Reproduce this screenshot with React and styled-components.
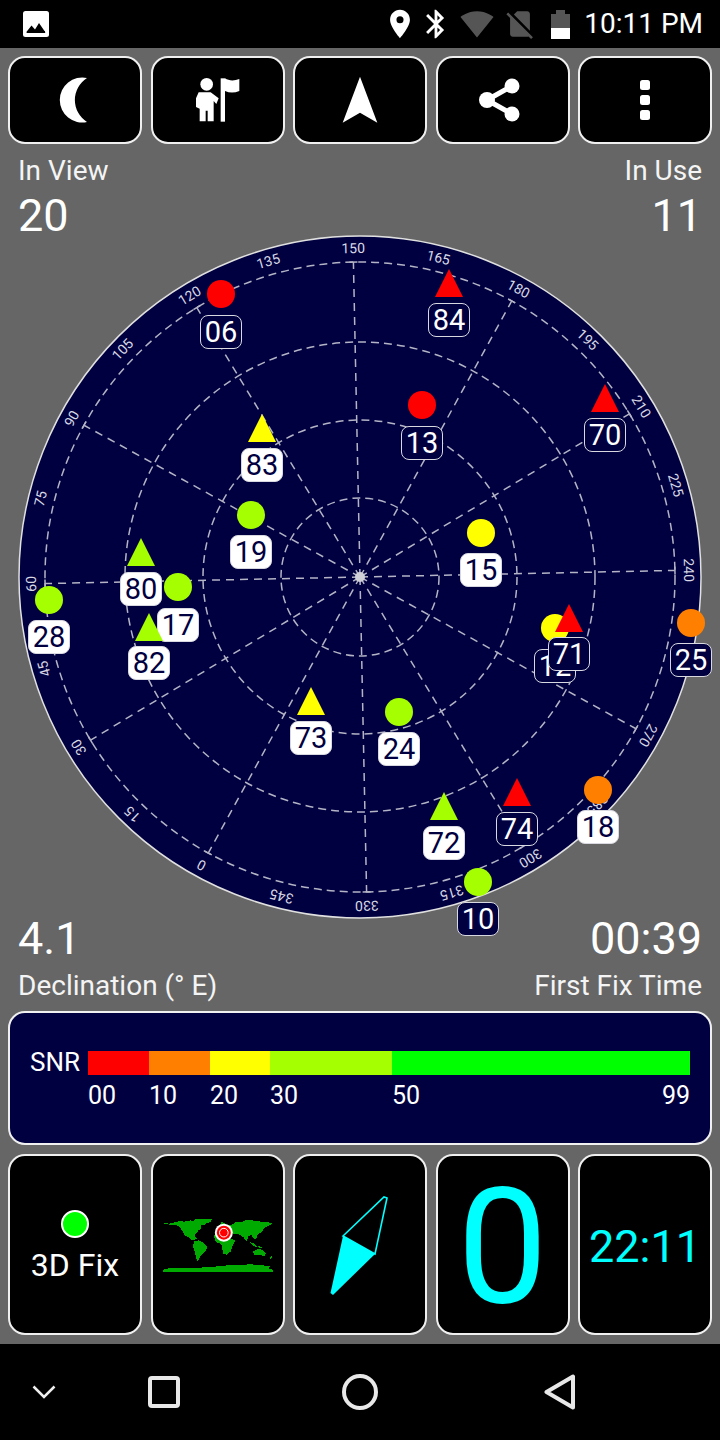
import React from "react";
import styled, { createGlobalStyle } from "styled-components";
import { MdPlace, MdBluetooth, MdSignalWifi4Bar, MdNoSim } from "react-icons/md";

const RADAR_LEFT = 18;
const RADAR_TOP = 235;
const RADAR_SIZE = 684;
const ROTATION = -151.2;

const RED = "#ff0000";
const ORANGE = "#ff8000";
const YELLOW = "#ffff00";
const LIME = "#a6ff00";

// x, y = marker centre (circle) or apex (triangle), labelX, labelY = centre of the tag
const satellites = [
  { id: "06", shape: "circle", color: RED, x: 221, y: 294, labelX: 221, labelY: 332 },
  { id: "84", shape: "triangle", color: RED, x: 449, y: 269, labelX: 449, labelY: 320 },
  { id: "13", shape: "circle", color: RED, x: 422, y: 405, labelX: 422, labelY: 443 },
  { id: "70", shape: "triangle", color: RED, x: 605, y: 384, labelX: 605, labelY: 435 },
  { id: "83", shape: "triangle", color: YELLOW, x: 262, y: 414, labelX: 262, labelY: 465, used: true },
  { id: "15", shape: "circle", color: YELLOW, x: 481, y: 533, labelX: 481, labelY: 570, used: true },
  { id: "19", shape: "circle", color: LIME, x: 251, y: 515, labelX: 251, labelY: 552, used: true },
  { id: "17", shape: "circle", color: LIME, x: 178, y: 587, labelX: 178, labelY: 625, used: true },
  { id: "80", shape: "triangle", color: LIME, x: 141, y: 538, labelX: 141, labelY: 589, used: true },
  { id: "28", shape: "circle", color: LIME, x: 49, y: 600, labelX: 49, labelY: 637, used: true },
  { id: "82", shape: "triangle", color: LIME, x: 149, y: 613, labelX: 149, labelY: 663, used: true },
  { id: "73", shape: "triangle", color: YELLOW, x: 311, y: 687, labelX: 311, labelY: 738, used: true },
  { id: "24", shape: "circle", color: LIME, x: 399, y: 712, labelX: 399, labelY: 749, used: true },
  { id: "12", shape: "circle", color: YELLOW, x: 555, y: 628, labelX: 555, labelY: 666 },
  { id: "71", shape: "triangle", color: RED, x: 569, y: 604, labelX: 569, labelY: 654 },
  { id: "25", shape: "circle", color: ORANGE, x: 691, y: 623, labelX: 691, labelY: 660 },
  { id: "18", shape: "circle", color: ORANGE, x: 598, y: 790, labelX: 598, labelY: 827, used: true },
  { id: "74", shape: "triangle", color: RED, x: 517, y: 778, labelX: 517, labelY: 829 },
  { id: "72", shape: "triangle", color: LIME, x: 444, y: 792, labelX: 444, labelY: 843, used: true },
  { id: "10", shape: "circle", color: LIME, x: 478, y: 882, labelX: 478, labelY: 919 },
];

const snrSegments = [
  { color: RED, width: 61, tick: "00" },
  { color: ORANGE, width: 61, tick: "10" },
  { color: YELLOW, width: 60, tick: "20" },
  { color: LIME, width: 122, tick: "30" },
  { color: "#00ff00", width: 298, tick: "50", end: "99" },
];

const GlobalStyle = createGlobalStyle`
  html, body {
    margin: 0;
    padding: 0;
    background: #666666;
  }
  body {
    font-family: Roboto, "Liberation Sans", sans-serif;
  }
`;

const Screen = styled.div`
  width: 720px;
  height: 1440px;
  display: flex;
  flex-direction: column;
  background: #666666;
  color: #fff;
  overflow: hidden;
`;

const StatusBar = styled.div`
  height: 48px;
  flex: none;
  background: #000;
  display: flex;
  align-items: center;
  justify-content: space-between;
  padding: 0 17px 0 23px;
`;

const StatusGroup = styled.div`
  display: flex;
  align-items: center;
`;

const StatusIcon = styled.span`
  display: flex;
  margin-left: ${(p) => p.$gap || 0}px;
  color: ${(p) => p.$color || "#fff"};
`;

const Clock = styled.span`
  font-size: 28px;
  margin-left: 14px;
  line-height: 48px;
`;

const Main = styled.div`
  flex: 1;
  display: flex;
  flex-direction: column;
  padding: 8px 8px 9px;
  min-height: 0;
`;

const TileRow = styled.div`
  display: flex;
  gap: 8.5px;
  flex: none;
  height: ${(p) => p.$height}px;
`;

const Tile = styled.div`
  flex: 1;
  box-sizing: border-box;
  background: #000;
  border: 2px solid #f0f0f0;
  border-radius: 17px;
  display: flex;
  flex-direction: column;
  align-items: center;
  justify-content: center;
  min-width: 0;
`;

const Stats = styled.div`
  flex: none;
  height: ${(p) => p.$height}px;
  display: flex;
  justify-content: space-between;
  padding: 0 10px;
`;

const StatColumn = styled.div`
  display: flex;
  flex-direction: column;
  align-items: ${(p) => (p.$right ? "flex-end" : "flex-start")};
`;

const StatLabel = styled.span`
  font-size: 28px;
  line-height: 32px;
  margin-top: ${(p) => p.$top || 0}px;
  color: #f4f4f4;
`;

const StatValue = styled.span`
  font-size: 45px;
  line-height: 50px;
  margin-top: ${(p) => p.$top || 0}px;
`;

const Radar = styled.div`
  position: relative;
  flex: none;
  width: ${RADAR_SIZE}px;
  height: ${RADAR_SIZE}px;
  margin: 0 auto;
`;

const RadarGrid = styled.svg`
  display: block;
  width: 100%;
  height: 100%;
`;

const Marker = styled.div`
  position: absolute;
  left: ${(p) => p.$x}px;
  top: ${(p) => p.$y}px;
  background: ${(p) => p.$color};
  width: 28px;
  height: 28px;
  ${(p) =>
    p.$shape === "circle"
      ? "border-radius: 50%; transform: translate(-14px, -14px);"
      : "clip-path: polygon(50% 0, 100% 100%, 0 100%); transform: translateX(-14px);"}
`;

const Tag = styled.div`
  position: absolute;
  left: ${(p) => p.$x}px;
  top: ${(p) => p.$y}px;
  transform: translate(-21px, -17px);
  box-sizing: border-box;
  width: 42px;
  height: 34px;
  border-radius: 8px;
  display: flex;
  align-items: center;
  justify-content: center;
  font-size: 29px;
  line-height: 1;
  border: 1px solid #d8d8e0;
  background: ${(p) => (p.$used ? "#ffffff" : "#000040")};
  color: ${(p) => (p.$used ? "#000040" : "#ffffff")};
`;

const SnrPanel = styled.div`
  flex: none;
  box-sizing: border-box;
  height: 134px;
  margin-bottom: 9px;
  background: #000040;
  border: 2px solid #f0f0f0;
  border-radius: 17px;
  display: flex;
  padding: 38px 20px 0 20px;
`;

const SnrTitle = styled.span`
  width: 58px;
  font-size: 26px;
  line-height: 22px;
`;

const SnrScale = styled.div`
  display: flex;
`;

const SnrSegment = styled.div`
  width: ${(p) => p.$width}px;
`;

const SnrSwatch = styled.div`
  height: 24px;
  background: ${(p) => p.$color};
`;

const SnrTicks = styled.div`
  display: flex;
  justify-content: space-between;
  font-size: 25px;
  line-height: 28px;
  margin-top: 7px;
`;

const FixDot = styled.div`
  width: 24px;
  height: 24px;
  border-radius: 50%;
  background: #00ff00;
  border: 2px solid #fff;
  margin-top: 8px;
  margin-bottom: 5px;
`;

const FixText = styled.span`
  font-size: 32px;
  line-height: 44px;
`;

const BigDigit = styled.span`
  font-size: 161px;
  line-height: 161px;
  padding-top: 6px;
  color: #00ffff;
`;

const CyanClock = styled.span`
  font-size: 45px;
  line-height: 50px;
  margin-top: 4px;
  color: #00ffff;
`;

const NavBar = styled.div`
  flex: none;
  height: 96px;
  background: #000;
  display: grid;
  grid-template-columns: 88px 152px 240px 160px;
  place-items: center;
`;

const PhotoIcon = () => (
  <svg width="26" height="26" viewBox="0 0 26 26">
    <rect width="26" height="26" rx="2.5" fill="#fff" />
    <path d="M3 21.5l5.5-7 3.5 4 4-6.5 6.5 9.5z" fill="#000" />
    <rect x="4" y="20" width="18" height="2" fill="#000" />
  </svg>
);

const BatteryIcon = () => (
  <svg width="19" height="29" viewBox="0 0 19 29">
    <rect x="5" width="9" height="5" fill="#555" />
    <rect y="4" width="19" height="14" fill="#555" />
    <rect y="18" width="19" height="11" fill="#fff" />
  </svg>
);

const MoonIcon = () => (
  <svg width="50" height="50" viewBox="0 0 50 50">
    <path d="M37 3A22.5 22.5 0 1 0 37 47A26 26 0 0 1 37 3Z" fill="#fff" />
  </svg>
);

const FlagPersonIcon = () => (
  <svg width="50" height="50" viewBox="130 60 150 150">
    <circle cx="171" cy="88" r="19" fill="#fff" />
    <path
      d="M147 112H183L207 130L200 147L192 138V199H174V167H168V199H150V161L139 156V130Z"
      fill="#fff"
    />
    <rect x="213" y="70" width="13" height="130" fill="#fff" />
    <path d="M226 70C238 78 254 78 269 72V108C254 114 240 114 226 108Z" fill="#fff" />
  </svg>
);

const ArrowIcon = () => (
  <svg width="50" height="50" viewBox="555 60 150 150">
    <path d="M630 65L682 203L630 173L578 203Z" fill="#fff" />
  </svg>
);

const ShareIcon = () => (
  <svg width="50" height="50" viewBox="0 0 50 50">
    <path d="M9 25L34 11M9 25L34 39" stroke="#fff" strokeWidth="5" fill="none" />
    <circle cx="9" cy="25" r="8" fill="#fff" />
    <circle cx="34" cy="11" r="7.5" fill="#fff" />
    <circle cx="34" cy="39" r="7.5" fill="#fff" />
  </svg>
);

const MoreIcon = () => (
  <svg width="12" height="42" viewBox="0 0 12 42">
    <rect x="1" y="1" width="10" height="10" rx="2.5" fill="#fff" />
    <rect x="1" y="16" width="10" height="10" rx="2.5" fill="#fff" />
    <rect x="1" y="31" width="10" height="10" rx="2.5" fill="#fff" />
  </svg>
);

const WorldMap = () => (
  <svg width="112" height="54" viewBox="37 85 331 162">
    <g fill="#00aa00" shapeRendering="crispEdges">
      <path d="M37 100L58 102L76 97L90 93L100 96L120 92L128 94L136 88L186 88L180 97L165 102L158 108L150 106L152 118L144 122L136 132L132 140L140 146L132 150L124 152L116 144L104 138L96 124L88 112L76 106L50 104Z" />
      <path d="M130 156L146 152L156 158L171 172L164 186L150 198L142 216L136 204L134 188L128 172Z" />
      <path d="M190 136L204 126L230 132L238 146L254 152L246 168L240 186L228 195L218 192L214 168L206 160L196 158Z" />
      <path d="M196 116L210 104L214 96L232 108L246 104L256 96L270 98L290 90L332 96L368 100L356 108L344 112L338 120L332 128L322 134L316 150L308 144L302 134L294 140L288 154L278 142L264 134L248 132L228 122L198 126Z" />
      <path d="M308 186L322 177L334 180L346 192L342 200L330 196L312 197Z" />
      <path d="M298 158L310 160L322 172L326 168L338 176L310 170Z" />
      <path d="M358 204L364 198L366 202L360 208Z" />
      <path d="M37 240L60 235L110 236L180 232L232 227L300 224L358 229L356 238L368 240V246H37Z" />
    </g>
    <circle cx="220" cy="129" r="27" fill="#fff" />
    <circle cx="220" cy="129" r="21" fill="#ff0000" />
    <circle cx="220" cy="129" r="13" fill="none" stroke="#fff" strokeWidth="3" />
  </svg>
);

const CompassNeedle = () => (
  <svg width="66" height="108" viewBox="328 1190 66 108">
    <path d="M344 1235L376 1253L388 1197L385 1196Z" fill="none" stroke="#00ffff" strokeWidth="1.6" />
    <path d="M344 1235L376 1253L334 1294L331.5 1292Z" fill="#00ffff" />
  </svg>
);

const SkyGrid = () => {
  const c = RADAR_SIZE / 2;
  const spokes = [];
  const labels = [];
  for (let az = 0; az < 360; az += 15) {
    const bearing = az + ROTATION;
    const rad = (bearing * Math.PI) / 180;
    const sin = Math.sin(rad);
    const cos = Math.cos(rad);
    labels.push(
      <text
        key={az}
        x={c + sin * 329}
        y={c - cos * 329}
        transform={`rotate(${bearing} ${c + sin * 329} ${c - cos * 329})`}
        textAnchor="middle"
        dominantBaseline="central"
        fontSize="14"
        fill="#d8d8e4"
      >
        {az}
      </text>
    );
    if (az % 30 === 0) {
      const ex = c + sin * 315;
      const ey = c - cos * 315;
      spokes.push(
        <g key={az}>
          <line x1={c} y1={c} x2={ex} y2={ey} strokeDasharray="8 6" />
          <line x1={ex - cos * 4} y1={ey - sin * 4} x2={ex + cos * 4} y2={ey + sin * 4} />
        </g>
      );
    }
  }
  return (
    <RadarGrid viewBox={`0 0 ${RADAR_SIZE} ${RADAR_SIZE}`}>
      <circle cx={c} cy={c} r={c - 1} fill="#000040" stroke="#e0e0e0" strokeWidth="1.5" />
      <g fill="none" stroke="#b4b4c6" strokeWidth="1.5">
        {[79, 157, 235, 315].map((r) => (
          <circle key={r} cx={c} cy={c} r={r} strokeDasharray="8 5" />
        ))}
        {spokes}
      </g>
      <circle cx={c} cy={c} r="5" fill="#d0d0d8" />
      {labels}
    </RadarGrid>
  );
};

export default function App() {
  return (
    <Screen>
      <GlobalStyle />
      <StatusBar>
        <PhotoIcon />
        <StatusGroup>
          <StatusIcon><MdPlace size={34} /></StatusIcon>
          <StatusIcon $gap={2}><MdBluetooth size={34} /></StatusIcon>
          <StatusIcon $gap={7} $color="#555"><MdSignalWifi4Bar size={34} /></StatusIcon>
          <StatusIcon $gap={9} $color="#555"><MdNoSim size={34} /></StatusIcon>
          <StatusIcon $gap={14}><BatteryIcon /></StatusIcon>
          <Clock>10:11 PM</Clock>
        </StatusGroup>
      </StatusBar>

      <Main>
        <TileRow $height={88}>
          <Tile><MoonIcon /></Tile>
          <Tile><FlagPersonIcon /></Tile>
          <Tile><ArrowIcon /></Tile>
          <Tile><ShareIcon /></Tile>
          <Tile><MoreIcon /></Tile>
        </TileRow>

        <Stats $height={91}>
          <StatColumn>
            <StatLabel $top={11}>In View</StatLabel>
            <StatValue $top={4}>20</StatValue>
          </StatColumn>
          <StatColumn $right>
            <StatLabel $top={11}>In Use</StatLabel>
            <StatValue $top={4}>11</StatValue>
          </StatColumn>
        </Stats>

        <Radar>
          <SkyGrid />
          {satellites.map((s) => (
            <React.Fragment key={s.id}>
              <Marker $shape={s.shape} $color={s.color} $x={s.x - RADAR_LEFT} $y={s.y - RADAR_TOP} />
              <Tag $used={s.used} $x={s.labelX - RADAR_LEFT} $y={s.labelY - RADAR_TOP}>
                {s.id}
              </Tag>
            </React.Fragment>
          ))}
        </Radar>

        <Stats $height={92}>
          <StatColumn>
            <StatValue $top={-5}>4.1</StatValue>
            <StatLabel $top={6}>Declination (° E)</StatLabel>
          </StatColumn>
          <StatColumn $right>
            <StatValue $top={-5}>00:39</StatValue>
            <StatLabel $top={6}>First Fix Time</StatLabel>
          </StatColumn>
        </Stats>

        <SnrPanel>
          <SnrTitle>SNR</SnrTitle>
          <SnrScale>
            {snrSegments.map((s) => (
              <SnrSegment key={s.tick} $width={s.width}>
                <SnrSwatch $color={s.color} />
                <SnrTicks>
                  <span>{s.tick}</span>
                  {s.end && <span>{s.end}</span>}
                </SnrTicks>
              </SnrSegment>
            ))}
          </SnrScale>
        </SnrPanel>

        <TileRow $height={181}>
          <Tile>
            <FixDot />
            <FixText>3D Fix</FixText>
          </Tile>
          <Tile><WorldMap /></Tile>
          <Tile><CompassNeedle /></Tile>
          <Tile><BigDigit>0</BigDigit></Tile>
          <Tile><CyanClock>22:11</CyanClock></Tile>
        </TileRow>
      </Main>

      <NavBar>
        <svg width="24" height="14" viewBox="0 0 24 14">
          <path d="M1.5 1.5L12 12L22.5 1.5" fill="none" stroke="#eee" strokeWidth="2.5" />
        </svg>
        <svg width="32" height="32" viewBox="0 0 32 32">
          <rect x="2" y="2" width="28" height="28" rx="2" fill="none" stroke="#e8e8e8" strokeWidth="4" />
        </svg>
        <svg width="36" height="36" viewBox="0 0 36 36">
          <circle cx="18" cy="18" r="16" fill="none" stroke="#e8e8e8" strokeWidth="4" />
        </svg>
        <svg width="32" height="36" viewBox="0 0 32 36">
          <path d="M29 2.5V33.5L2.5 18Z" fill="none" stroke="#e8e8e8" strokeWidth="4" strokeLinejoin="round" />
        </svg>
      </NavBar>
    </Screen>
  );
}
